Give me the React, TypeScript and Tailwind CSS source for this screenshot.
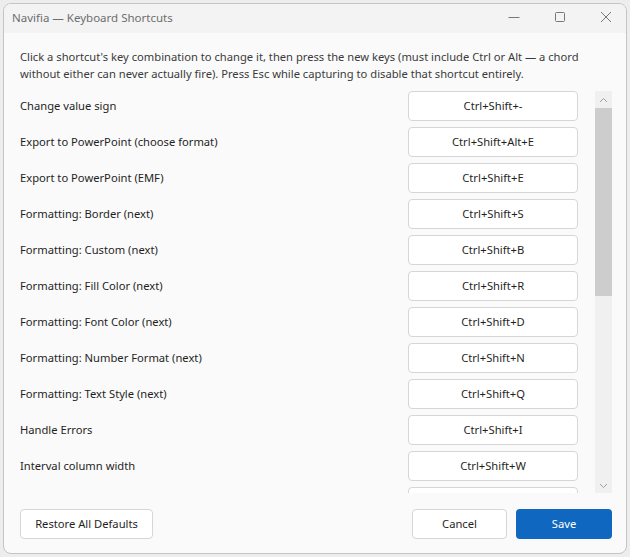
const shortcuts = [
  { label: "Change value sign", keys: "Ctrl+Shift+-" },
  { label: "Export to PowerPoint (choose format)", keys: "Ctrl+Shift+Alt+E" },
  { label: "Export to PowerPoint (EMF)", keys: "Ctrl+Shift+E" },
  { label: "Formatting: Border (next)", keys: "Ctrl+Shift+S" },
  { label: "Formatting: Custom (next)", keys: "Ctrl+Shift+B" },
  { label: "Formatting: Fill Color (next)", keys: "Ctrl+Shift+R" },
  { label: "Formatting: Font Color (next)", keys: "Ctrl+Shift+D" },
  { label: "Formatting: Number Format (next)", keys: "Ctrl+Shift+N" },
  { label: "Formatting: Text Style (next)", keys: "Ctrl+Shift+Q" },
  { label: "Handle Errors", keys: "Ctrl+Shift+I" },
  { label: "Interval column width", keys: "Ctrl+Shift+W" },
  { label: "", keys: "" },
];

const App = () => {
  return (
    <div
      className="w-[630px] h-[557px] bg-[#ededed] p-[3px]"
      style={{ fontFamily: '"Noto Sans", "Open Sans", sans-serif' }}
    >
      <div className="flex flex-col h-full rounded-[8px] border border-[#c4c4c4] overflow-hidden bg-[#fafafa]">
        {/* title bar */}
        <div className="flex items-center h-[29px] bg-[#f3f3f3] shrink-0">
          <span className="pl-[8px] text-[11.5px] text-[#6e6e6e] -mt-[2px]">Navifia — Keyboard Shortcuts</span>
          <div className="ml-auto flex items-center h-full -mr-[3px] -mt-[3px]">
            <div className="w-[46px] h-full flex items-center justify-center">
              <svg width="12" height="12" viewBox="0 0 12 12">
                <path d="M0.5 6.5h11" stroke="#777" strokeWidth="1" />
              </svg>
            </div>
            <div className="w-[46px] h-full flex items-center justify-center">
              <svg width="12" height="12" viewBox="0 0 12 12">
                <rect x="1.5" y="1.5" width="9" height="9" rx="1" fill="none" stroke="#777" strokeWidth="1" />
              </svg>
            </div>
            <div className="w-[46px] h-full flex items-center justify-center">
              <svg width="12" height="12" viewBox="0 0 12 12">
                <path d="M1 1l10 10M11 1L1 11" stroke="#777" strokeWidth="1" />
              </svg>
            </div>
          </div>
        </div>

        {/* body */}
        <div className="flex flex-col flex-1 min-h-0 pl-[16px] pr-[14px] pt-[15px] pb-[14px]">
          <p className="text-[11.2px] leading-[17px] text-[#3a3a3a] whitespace-nowrap">
            Click a shortcut's key combination to change it, then press the new keys (must include Ctrl or Alt — a chord
            <br />
            without either can never actually fire). Press Esc while capturing to disable that shortcut entirely.
          </p>

          <div className="flex mt-[9px] h-[402px] shrink-0">
            <div className="flex-1 overflow-hidden flex flex-col gap-[6px]">
              {shortcuts.map((s, i) => (
                <div key={i} className="flex items-center shrink-0">
                  <span className="flex-1 text-[11.2px] text-[#1f1f1f]">{s.label}</span>
                  <button className="w-[170px] h-[30px] bg-white border border-[#d6d6d6] rounded-[4px] text-[11.2px] text-[#1f1f1f]">
                    {s.keys}
                  </button>
                </div>
              ))}
            </div>
            <div className="w-[17px] ml-[17px] flex flex-col bg-[#f0f0f0]">
              <div className="h-[17px] flex items-center justify-center">
                <svg width="9" height="6" viewBox="0 0 9 6">
                  <path d="M1 5l3.5-3.5L8 5" fill="none" stroke="#a0a0a0" strokeWidth="1" />
                </svg>
              </div>
              <div className="h-[188px] bg-[#cdcdcd]" />
              <div className="flex-1" />
              <div className="h-[14px] flex items-center justify-center">
                <svg width="9" height="6" viewBox="0 0 9 6">
                  <path d="M1 1l3.5 3.5L8 1" fill="none" stroke="#a0a0a0" strokeWidth="1" />
                </svg>
              </div>
            </div>
          </div>

          <div className="flex items-center mt-auto">
            <button className="w-[133px] h-[30px] bg-white border border-[#d6d6d6] rounded-[4px] text-[11.2px] text-[#1f1f1f]">
              Restore All Defaults
            </button>
            <button className="ml-auto w-[95px] h-[30px] bg-white border border-[#d6d6d6] rounded-[4px] text-[11.2px] text-[#1f1f1f]">
              Cancel
            </button>
            <button className="ml-[9px] w-[96px] h-[30px] bg-[#0f67c0] rounded-[4px] text-[11.2px] text-white">
              Save
            </button>
          </div>
        </div>
      </div>
    </div>
  );
};

export default App;
